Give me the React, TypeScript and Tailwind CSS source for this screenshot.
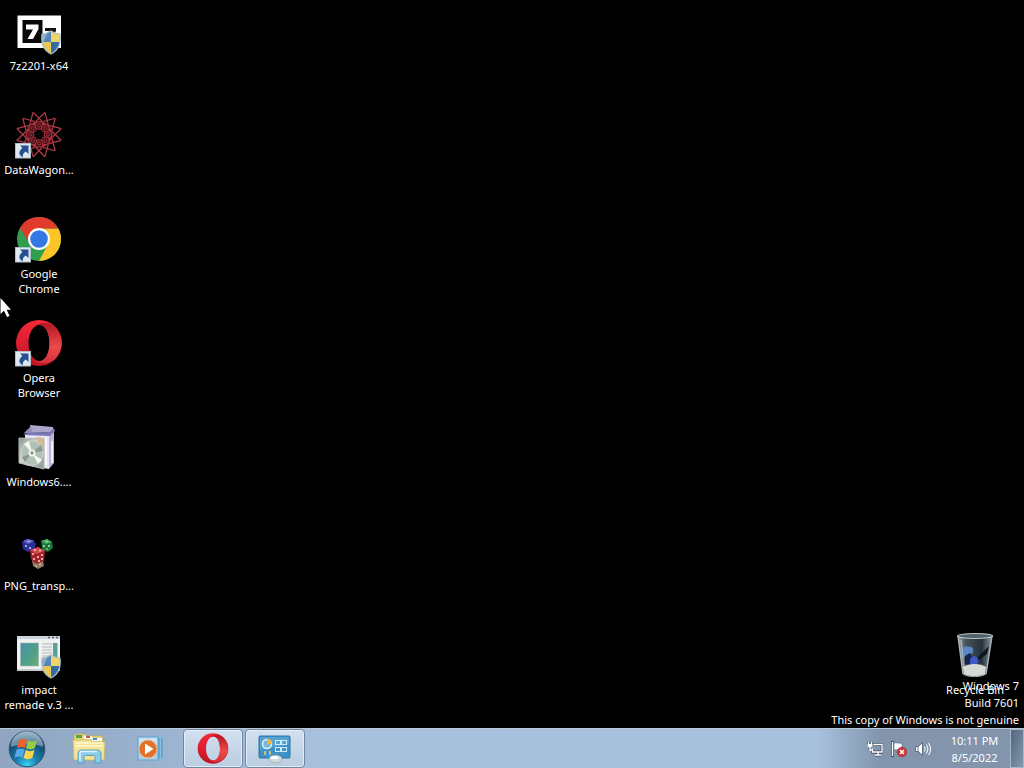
import type { ReactNode } from "react";

const polar = (cx: number, cy: number, r: number, deg: number) => {
  const a = (deg * Math.PI) / 180;
  return [cx + r * Math.cos(a), cy + r * Math.sin(a)] as const;
};

function Shield() {
  return (
    <g>
      <clipPath id="shieldClip">
        <path d="M36 23c3 2 6 3 9 3 1 8-1 16-9 20-8-4-10-12-9-20 3 0 6-1 9-3z" />
      </clipPath>
      <g clipPath="url(#shieldClip)">
        <path d="M26 22h10v12H26z" fill="#5487b8" />
        <path d="M36 22h10v12H36z" fill="#f0d467" />
        <path d="M26 34h10v13H26z" fill="#e9c94f" />
        <path d="M36 34h10v13H36z" fill="#356ca8" />
        <path d="M26 22h8L27 37z" fill="#fff" opacity=".35" />
      </g>
      <path
        d="M36 23c3 2 6 3 9 3 1 8-1 16-9 20-8-4-10-12-9-20 3 0 6-1 9-3z"
        fill="none"
        stroke="#a9bcc8"
        strokeWidth="1.200"
      />
    </g>
  );
}

function ShortcutArrow() {
  return (
    <g>
      <rect x=".5" y="31.5" width="15" height="14.500" fill="#dfe7ef" stroke="#b5bec8" />
      <path d="M5 33.500h8.500v8.500l-2.700-2.600c-2.600 1.600-3.400 3.400-2.800 5.800C3.600 43.500 3 39.500 7.400 36z" fill="#24518f" />
    </g>
  );
}

function SevenZipIcon() {
  return (
    <svg viewBox="0 0 48 48" className="size-12" aria-hidden="true">
      <rect x="2.500" y="7.500" width="43.500" height="32.500" fill="#fff" />
      <rect x="7.500" y="12" width="20" height="23" fill="#080808" />
      <path d="M11 16.500h12.500V21l-5.500 10h-5.500l5.500-9.500h-7z" fill="#fff" />
      <path d="M30 20h11v3l-6 8h6v3H30v-3l6-8h-6z" fill="#111" />
      <Shield />
    </svg>
  );
}

function DataWagonIcon() {
  const star = Array.from({ length: 12 }, (_, i) => {
    const a = polar(24, 22.5, 23, i * 30 + 15);
    const b = polar(24, 22.5, 23, (i + 4) * 30 + 15);
    return `M${a[0]} ${a[1]}L${b[0]} ${b[1]}`;
  }).join("");
  return (
    <svg viewBox="0 0 48 48" className="size-12" fill="none" aria-hidden="true">
      <path d={star} stroke="#b23c48" strokeWidth="1.200" />
      {Array.from({ length: 8 }, (_, i) => {
        const p = polar(24, 22.5, 9, i * 45);
        return (
          <g key={i} stroke="#b5323e">
            <circle cx={p[0]} cy={p[1]} r="3.800" fill="#3c0f15" strokeWidth="1.100" />
            <circle cx={p[0]} cy={p[1]} r="1.600" strokeWidth=".9" />
          </g>
        );
      })}
      <circle cx="24" cy="22.500" r="13.500" stroke="#7c222b" strokeWidth=".8" />
      <circle cx="24" cy="22.500" r="4" fill="#080203" />
      <ShortcutArrow />
    </svg>
  );
}

function ChromeIcon() {
  return (
    <svg viewBox="0 0 48 48" className="size-12" aria-hidden="true">
      <circle cx="24" cy="23" r="22" fill="#2f9e4f" />
      <path d="M24 12.500h19.300A22 22 0 0 1 24 45l9.100-16.800z" fill="#fcc629" />
      <path d="M43.300 12.500A22 22 0 0 0 5 12l9.900 16.300L24 12.500z" fill="#e23b2e" />
      <circle cx="24" cy="23" r="11" fill="#fff" />
      <circle cx="24" cy="23" r="8.800" fill="#3478e5" />
      <ShortcutArrow />
    </svg>
  );
}

function OperaMark() {
  return (
    <g>
      <defs>
        <linearGradient id="operaOuter" x1="0" y1="0" x2="0" y2="1">
          <stop offset="0" stopColor="#f52a3a" />
          <stop offset="1" stopColor="#bf1425" />
        </linearGradient>
        <linearGradient id="operaInner" x1="0" y1="0" x2="0" y2="1">
          <stop offset="0" stopColor="#b01724" />
          <stop offset=".6" stopColor="#ee4a4c" />
          <stop offset="1" stopColor="#d5303b" />
        </linearGradient>
      </defs>
      <path
        fillRule="evenodd"
        d="M24 0a23 23 0 1 0 0 46 23 23 0 0 0 0-46zm.5 5c6 0 10 8 10 18s-4 18-10 18-11-8-11-18 5-18 11-18z"
        fill="url(#operaOuter)"
      />
      <path
        d="M19 6.500c5-5 14-4.500 20-.5a23 23 0 0 1 0 34c-6 4-15 4.500-20-.5 2 1.200 3.500 1.500 5.500 1.500 6 0 10-8 10-18s-4-18-10-18c-2 0-3.500.3-5.500 1.500z"
        fill="url(#operaInner)"
      />
    </g>
  );
}

function OperaIcon() {
  return (
    <svg viewBox="0 0 48 48" className="size-12" aria-hidden="true">
      <OperaMark />
      <ShortcutArrow />
    </svg>
  );
}

function InstallerIcon() {
  return (
    <svg viewBox="0 0 48 48" className="size-12" aria-hidden="true">
      <defs>
        <linearGradient id="discCase" x1="0" y1="0" x2="1" y2="1">
          <stop offset="0" stopColor="#8d9796" />
          <stop offset=".4" stopColor="#cbd4cc" />
          <stop offset="1" stopColor="#8b9990" />
        </linearGradient>
      </defs>
      <path d="M15 1l23 2v5l-22 1z" fill="#a9a6c9" />
      <path d="M9 9l7-7 1 7z" fill="#8f8cb8" />
      <path d="M10 10l24 1v34l-24-4z" fill="#e4e4f2" />
      <path d="M34 11l5-6v34l-5 6z" fill="#b8b6d2" />
      <path d="M8 10l7-1.500 20-.5 4-4 1 3-5 5-25-1z" fill="#7a77b4" />
      <path d="M37 17v22M31 14v27" stroke="#fff" strokeWidth="1.500" />
      <path d="M4 14l25 1v30L4 39z" fill="url(#discCase)" stroke="#b3bbb7" />
      <path d="M21 13l8 1v9l-6-3z" fill="#d7b983" opacity=".8" />
      <ellipse cx="17" cy="29" rx="11" ry="12.500" fill="#b3c2b8" stroke="#dce4dc" strokeWidth=".6" />
      <path d="M17 29L9 20l5-3zM17 29l10 7-4 4z" fill="#f5f8f1" />
      <path d="M17 29l9-8 2 6zM17 29l-7 9-3-5z" fill="#899c91" />
      <circle cx="17" cy="29" r="3.500" fill="#eef3ee" />
      <circle cx="17" cy="29" r="1.400" fill="#77857e" />
    </svg>
  );
}

function DiceIcon() {
  return (
    <svg viewBox="0 0 48 48" className="size-12" aria-hidden="true">
      <path d="M7 14l5-3 6 1 3 4-2 6-6 2-5-3z" fill="#2d2f9c" />
      <path d="M8 13l5-2 6 2-6 3z" fill="#6668c9" />
      <path d="M26 13l6-2 5 3 1 6-5 4-6-2z" fill="#16783a" />
      <path d="M26 13l6-2 5 3-6 2z" fill="#49aa67" />
      <path d="M17 32l11 1 1 5-6 3-5-3z" fill="#937d61" />
      <path d="M15 22l8-3 7 4-1 10-8 3-5-5z" fill="#a6202a" />
      <path d="M15 22l8-3 7 4-9 3z" fill="#d14b50" />
      <g fill="#f2dddd">
        <circle cx="11" cy="18" r=".9" /><circle cx="15" cy="20" r=".9" /><circle cx="14" cy="13.500" r=".8" />
        <circle cx="29" cy="18" r=".9" /><circle cx="34" cy="18" r=".9" /><circle cx="32" cy="21" r=".8" /><circle cx="32" cy="13.500" r=".8" />
        <circle cx="18" cy="26" r="1" /><circle cx="19" cy="31" r="1" /><circle cx="23" cy="29" r="1" /><circle cx="27" cy="27" r="1" />
        <circle cx="24" cy="33" r="1" /><circle cx="27" cy="31" r="1" /><circle cx="20" cy="22" r=".9" /><circle cx="25" cy="22.500" r=".9" />
        <circle cx="21" cy="38" r=".8" /><circle cx="25" cy="36.500" r=".8" />
      </g>
    </svg>
  );
}

function ProgramIcon() {
  return (
    <svg viewBox="0 0 48 48" className="size-12" aria-hidden="true">
      <defs>
        <linearGradient id="programPane" x1="0" y1="0" x2="1" y2="1">
          <stop offset="0" stopColor="#4a8fae" />
          <stop offset=".6" stopColor="#50a184" />
          <stop offset="1" stopColor="#6cae74" />
        </linearGradient>
      </defs>
      <rect x="2" y="4" width="43" height="35" fill="#f0f2f2" />
      <rect x="2" y="4" width="43" height="3" fill="#cfd5dc" />
      <path d="M33 5.500h2M37 5.500h2M41 5.500h2" stroke="#59636d" strokeWidth="1.500" />
      <rect x="5.500" y="11" width="18" height="23" fill="url(#programPane)" stroke="#a2b5b5" strokeWidth=".6" />
      <path d="M27 12h10M27 15h10M27 18h10M27 21h10M27 24h8" stroke="#b0b6ba" />
      <rect x="38" y="11" width="4.500" height="14" fill="#5d9f95" />
      <rect x="2" y="37" width="43" height="2" fill="#c5cace" />
      <Shield />
    </svg>
  );
}

function RecycleBinIcon() {
  return (
    <svg viewBox="0 0 48 48" className="size-12" aria-hidden="true">
      <defs>
        <linearGradient id="binGlass" x1="0" y1="0" x2="1" y2="0">
          <stop offset="0" stopColor="#9aa8ad" />
          <stop offset=".22" stopColor="#46545c" />
          <stop offset=".7" stopColor="#27333c" />
          <stop offset="1" stopColor="#8a979c" />
        </linearGradient>
      </defs>
      <path d="M7 4l5 38c3 4 20 4 23 0l6-38z" fill="url(#binGlass)" />
      <path d="M11 19c0-4 4-6 7-4 3-1 5 2 4 5l-3 4-7 1z" fill="#5c86c4" />
      <path d="M14 24l5-3 3 5-1 7-7-1z" fill="#18254a" />
      <path d="M19 28c1-4 5-5 8-2 1 3 0 6-3 8l-5-1z" fill="#4058c8" />
      <path d="M26 26l12-12-2 8-8 6z" fill="#10161f" />
      <path d="M12 35c6-4 18-4 23 0l-1 7c-5 3-16 3-21 0z" fill="#d7dad4" />
      <path d="M7 4l5 38M41 4l-6 38" stroke="#a6b3b7" strokeWidth="1.500" />
      <path d="M10 8l3 29" stroke="#fff" opacity=".4" strokeWidth="1.500" />
      <ellipse cx="24" cy="4" rx="17.500" ry="2.500" fill="#51616a" stroke="#b9c5c9" strokeWidth="1.200" />
      <path d="M12 42c5 3.500 18 3.500 23 0" fill="none" stroke="#9da9ad" />
    </svg>
  );
}

function DesktopItem({ icon, lines }: { icon: ReactNode; lines: string[] }) {
  return (
    <button type="button" className="flex h-[104px] w-[78px] flex-col items-center gap-[2px] pt-2 text-center text-white">
      {icon}
      <span className="text-[11px] leading-[15px] whitespace-nowrap">
        {lines.map((line) => (
          <span key={line} className="block">{line}</span>
        ))}
      </span>
    </button>
  );
}

function StartOrb() {
  return (
    <svg viewBox="0 0 38 38" className="size-[38px]" aria-hidden="true">
      <defs>
        <radialGradient id="orbFill" cx=".5" cy=".95" r=".9">
          <stop offset="0" stopColor="#39d5f5" />
          <stop offset=".35" stopColor="#187eae" />
          <stop offset=".75" stopColor="#174c74" />
          <stop offset="1" stopColor="#6f91ac" />
        </radialGradient>
      </defs>
      <circle cx="19" cy="19" r="17.800" fill="url(#orbFill)" stroke="#31506d" strokeWidth="1" />
      <path d="M3 17a16 16 0 0 1 32 0c-8-4-22-4-32 0z" fill="#d4e4ef" opacity=".42" />
      <path d="M11 10c3-1.500 6-1.500 8 0l-2 8c-3-1.400-5-1.200-8 .2z" fill="#ef622b" />
      <path d="M20 10.500c3 1.500 6 1.500 9-.2l-2.200 8c-3 1.500-6 1.500-8.800 0z" fill="#9acb44" />
      <path d="M8.500 19.500c3-1.400 5-1.400 8 0l-2 8c-3-1.500-5-1.400-8 .2z" fill="#58a9e8" />
      <path d="M17.700 20c3 1.500 5.500 1.500 8.800 0l-2.200 8c-3 1.500-6 1.500-8.800 0z" fill="#ffd34b" />
    </svg>
  );
}

function ExplorerIcon() {
  return (
    <svg viewBox="0 0 34 32" className="h-8 w-[34px]" aria-hidden="true">
      <path d="M2 5V3l2-2h9l2 2h15l1 2v5H2z" fill="#e8d47a" stroke="#bda64c" strokeWidth=".6" />
      <path d="M4 2h6v3H4z" fill="#55a543" />
      <path d="M12 3h8v3h-8z" fill="#fff" />
      <path d="M14 3h4v2h-4z" fill="#d05b3c" />
      <path d="M20 5h10v3H20z" fill="#f6f8fa" />
      <path d="M21 5h4v2h-4z" fill="#4b8bc6" />
      <path d="M1 7h18l2 2h12l-1 18H2z" fill="#f3e49a" stroke="#cfb95f" strokeWidth=".7" />
      <path d="M3 10h28M3 13h28" stroke="#fff7cb" strokeWidth="1.300" />
      <path d="M6 30V20c0-2 2-3 4-3h15c2 0 4 1 4 3v10h-6v-6c0-1-1-1.500-2-1.500h-7c-1 0-2 .5-2 1.500v6z" fill="#8ccce9" stroke="#478fb6" strokeWidth=".8" />
      <path d="M8 28v-8c0-1 1-1.500 2-1.500h15" fill="none" stroke="#dff5ff" strokeWidth="1.400" />
    </svg>
  );
}

function MediaPlayerIcon() {
  return (
    <svg viewBox="0 0 28 28" className="size-7" aria-hidden="true">
      <path d="M19 2h7v20l-5 4z" fill="#8dbcdc" />
      <path d="M22 3v21M25 3v20" stroke="#4d8db8" strokeWidth="1" />
      <rect x="1" y="2" width="20" height="23" fill="#b0d0e6" stroke="#5fa3cb" />
      <path d="M2 3h18v7L2 17z" fill="#dcf0fb" opacity=".6" />
      <circle cx="11" cy="14" r="9" fill="#e0712a" stroke="#f0b684" />
      <path d="M8 8.500l8.500 5.500L8 19.500z" fill="#fff" />
    </svg>
  );
}

function ControlPanelIcon() {
  return (
    <svg viewBox="0 0 34 30" className="h-[30px] w-[34px]" aria-hidden="true">
      <rect x="1" y="2" width="31" height="22" rx="1" fill="#3f92c6" stroke="#2c75a3" />
      <path d="M2 3h29v7L2 16z" fill="#75b7dc" opacity=".45" />
      <circle cx="9" cy="10" r="4.500" fill="#74b9da" stroke="#e5f4fb" strokeWidth="1.400" />
      <path d="M9 10V5a5 5 0 0 1 5 5z" fill="#f3b438" />
      <g fill="none" stroke="#ccecfb">
        <rect x="17.500" y="6.500" width="5" height="4" /><rect x="23.500" y="6.500" width="5" height="4" />
        <rect x="17.500" y="13.500" width="5" height="4" /><rect x="23.500" y="13.500" width="5" height="4" />
      </g>
      <path d="M7 17v4M12 17v4" stroke="#dbeef5" />
      <path d="M6 19h2M11 18h2" stroke="#f4b541" strokeWidth="2" />
      <ellipse cx="17.500" cy="25" rx="6.500" ry="4" fill="#d4dbde" stroke="#879aa5" strokeWidth=".6" />
      <ellipse cx="16.500" cy="23.500" rx="4" ry="1.500" fill="#fff" />
    </svg>
  );
}

function NetworkIcon() {
  return (
    <svg viewBox="0 0 16 16" className="size-4" fill="none" aria-hidden="true">
      <path d="M6.500 3.500H15V11H5.500V8M8 14h6M11 11v3M1.500 1v4M4.500 1v4M3 6v3" stroke="#3f5066" strokeWidth="2.800" />
      <path d="M6.500 3.500H15V11H5.500V7.500" stroke="#fff" strokeWidth="1.300" />
      <path d="M8 14h6M11 11v3M1.500 1v2.500M4.500 1v2.500M3 6v3h2.500" stroke="#fff" strokeWidth="1.300" />
      <path d="M.500 3h5v2L4 6.500H2L.500 5z" fill="#fff" />
    </svg>
  );
}

function FlagIcon() {
  return (
    <svg viewBox="0 0 16 16" className="size-4" aria-hidden="true">
      <path d="M1.500 0v16" stroke="#35465b" strokeWidth="2.500" />
      <path d="M3 2c3-1 5 1 8 0v7c-3 1-5-1-8 0z" fill="#fff" stroke="#53657a" strokeWidth=".6" />
      <path d="M1.500 1v14" stroke="#fff" strokeWidth="1.300" />
      <circle cx="11" cy="11" r="4.800" fill="#cf3539" stroke="#9b3037" strokeWidth=".6" />
      <path d="M9 9l4 4M13 9l-4 4" stroke="#fff" strokeWidth="1.500" />
    </svg>
  );
}

function SpeakerIcon() {
  return (
    <svg viewBox="0 0 16 16" className="size-4" fill="none" aria-hidden="true">
      <path d="M.500 5.500h3L7.500 1.500v13l-4-4h-3z" fill="#fff" stroke="#45566b" strokeWidth=".8" />
      <path d="M3 5.500v5" stroke="#66768a" />
      <path d="M9.500 5.500q1.500 2.500 0 5M11.500 3.500q3 4.500 0 9M13.500 2q4 6 0 12" stroke="#fff" strokeWidth="1" />
    </svg>
  );
}

const desktopItems: { icon: ReactNode; lines: string[] }[] = [
  { icon: <SevenZipIcon />, lines: ["7z2201-x64"] },
  { icon: <DataWagonIcon />, lines: ["DataWagon..."] },
  { icon: <ChromeIcon />, lines: ["Google", "Chrome"] },
  { icon: <OperaIcon />, lines: ["Opera", "Browser"] },
  { icon: <InstallerIcon />, lines: ["Windows6...."] },
  { icon: <DiceIcon />, lines: ["PNG_transp..."] },
  { icon: <ProgramIcon />, lines: ["impact", "remade v.3 ..."] },
];

const pinnedClass = "flex w-[60px] items-center justify-center";
const openClass =
  "flex w-[60px] items-center justify-center rounded-sm border border-[#71869f] bg-linear-to-b from-[#d3e0ee] to-[#b9cde2] shadow-[inset_0_0_0_1px_#e3edf6]";

export default function App() {
  return (
    <div className="flex min-h-screen w-full flex-col bg-black font-['Noto_Sans','Open_Sans',sans-serif]">
      <main className="relative flex flex-1 flex-col overflow-hidden">
        <div className="flex flex-col items-start">
          {desktopItems.map((item) => (
            <DesktopItem key={item.lines[0]} {...item} />
          ))}
        </div>
        <div className="absolute right-[10px] bottom-0">
          <DesktopItem icon={<RecycleBinIcon />} lines={["Recycle Bin"]} />
        </div>
        <div className="pointer-events-none absolute right-[5px] bottom-0 text-right text-[11px] leading-[17px] text-white">
          <p>Windows 7</p>
          <p>Build 7601</p>
          <p>This copy of Windows is not genuine</p>
        </div>
        <svg viewBox="0 0 12 20" className="absolute top-[298px] left-0 h-5 w-3" aria-hidden="true">
          <path d="M.500 0v16l3.500-3.300L7 19l2.500-1-2.800-6.200h4.300z" fill="#fff" />
        </svg>
      </main>

      <footer className="flex h-10 items-stretch border-t border-[#b9c7d6] bg-linear-to-r from-[#8fa5c0] via-[#a6c0dd] via-30% to-[#a6c0dd] text-white">
        <button type="button" aria-label="Start" className="flex w-[54px] items-center justify-center">
          <StartOrb />
        </button>
        <nav aria-label="Taskbar" className="flex gap-[2px] pl-[5px]">
          <button type="button" aria-label="Windows Explorer" className={pinnedClass}><ExplorerIcon /></button>
          <button type="button" aria-label="Windows Media Player" className={pinnedClass}><MediaPlayerIcon /></button>
          <button type="button" aria-label="Opera Browser" className={openClass}>
            <svg viewBox="0 0 48 46" className="h-[31px] w-8" aria-hidden="true"><OperaMark /></svg>
          </button>
          <button type="button" aria-label="Control Panel" className={openClass}><ControlPanelIcon /></button>
        </nav>
        <div className="ml-auto flex items-stretch bg-linear-to-r from-transparent to-[#8295ad] to-30% pl-12">
          <div className="flex items-center gap-2">
            <button type="button" aria-label="Network"><NetworkIcon /></button>
            <button type="button" aria-label="Action Center"><FlagIcon /></button>
            <button type="button" aria-label="Volume"><SpeakerIcon /></button>
          </div>
          <button type="button" className="flex w-[79px] flex-col items-center justify-center pl-2 text-[11px] leading-[17px] whitespace-nowrap">
            <time>10:11 PM</time>
            <time>8/5/2022</time>
          </button>
          <button type="button" aria-label="Show desktop" className="w-[14px] border border-[#a9b8c8] bg-linear-to-br from-[#52667e] to-[#8498ae]" />
        </div>
      </footer>
    </div>
  );
}
